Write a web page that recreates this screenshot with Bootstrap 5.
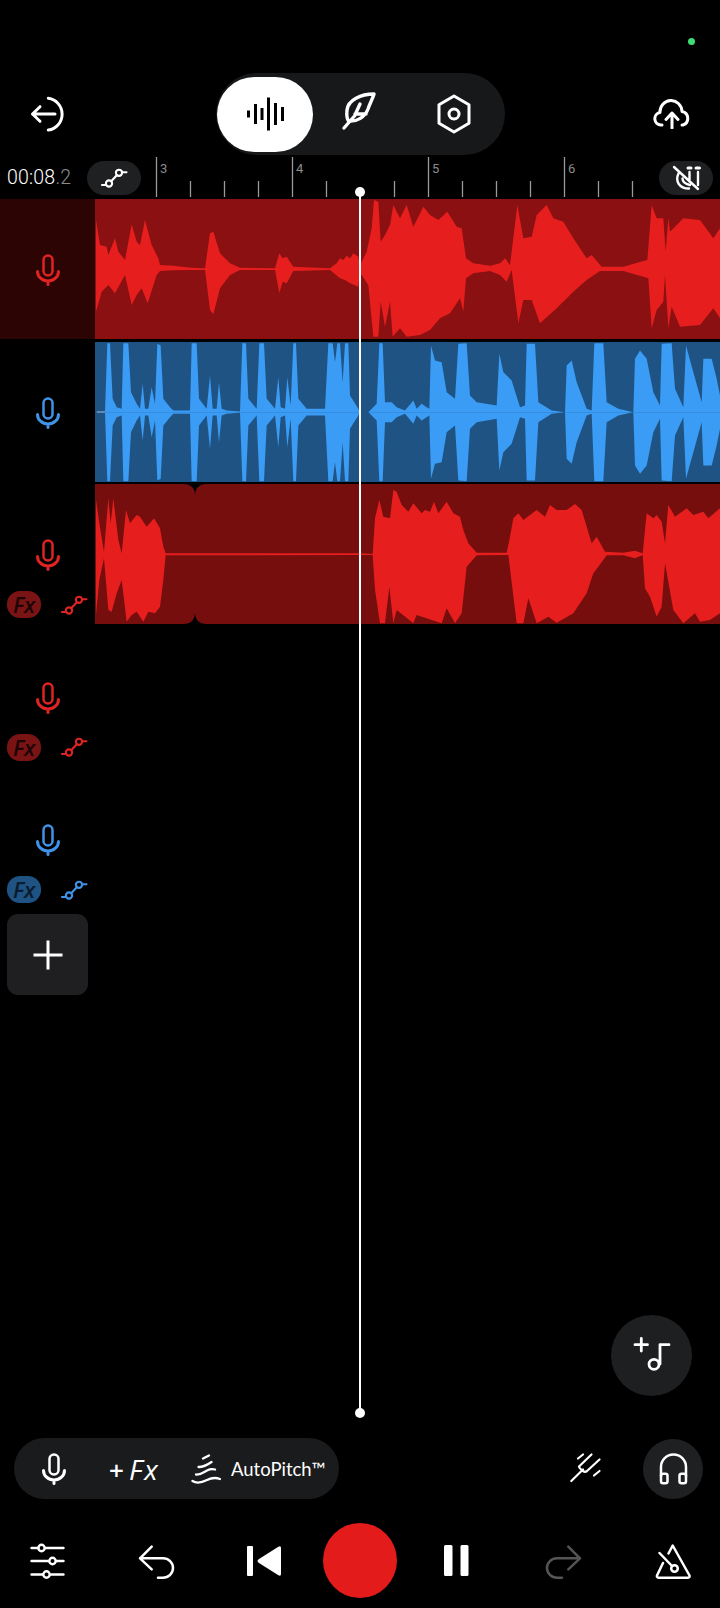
<!DOCTYPE html>
<html lang="en">
<head>
  <meta charset="UTF-8">
  <title>Studio - Multitrack</title>
  <meta name="viewport" content="width=device-width, initial-scale=1.0"/>
  <link href="https://cdn.jsdelivr.net/npm/bootstrap@5.3.3/dist/css/bootstrap.min.css" rel="stylesheet">
  <style>
    html, body { background: #000; }
    body { font-family: Roboto, "Liberation Sans", sans-serif; color: #fff; }
    svg { display: block; }
    .ico { fill: none; stroke: currentColor; stroke-linecap: round; stroke-linejoin: round; }

    .studio { height: 1608px; overflow: hidden; padding-bottom: 10px; }
    .status-bar { height: 73px; padding: 38px 25px 0 0; }
    .status-dot { width: 7px; height: 7px; background: #3ddc74; }

    .top-bar { height: 82px; display: grid; grid-template-columns: 216px 289px 1fr; }
    .mode-pill { background: #17181a; border-radius: 41px; height: 82px; }
    .mode-active { background: #fff; color: #000; width: 96px; height: 75px; border-radius: 38px; margin-left: 1px; }
    .mode-btn { width: 94px; height: 75px; }

    .ruler-bar { height: 44px; }
    .clock { width: 88px; padding-left: 7px; font-size: 19.5px; font-weight: 300; margin-top: 2px; white-space: nowrap; letter-spacing: .2px; }
    .clock span { color: #8a8a8a; }
    .ruler-pill { width: 54px; height: 34px; background: #1f2022; border-radius: 17px; margin-top: 1px; flex: none; }
    .ruler-mark { font: 13px Roboto, sans-serif; fill: #8c8c8c; }

    .track { height: 142.5px; }
    .rail { width: 95px; flex: none; height: 140px; padding: 55px 7px 0; }
    .rail-on { background: #2b0403; }
    .clip { width: 625px; height: 140px; }
    .clip-red { background: #8a1012; color: #e61e1e; }
    .clip-blue { background: #1f5384; color: #3b9cf5; }
    .clip-dim { background: #760e0e; color: #e61e1e; }
    .tone-red { color: #e02323; }
    .tone-blue { color: #3f93e8; }
    .fx-row { margin-top: 20px; height: 27px; }
    .fx-tag { width: 34px; height: 27px; border-radius: 13px; font: italic 600 22px "Open Sans", sans-serif; line-height: 26px; text-align: center; }
    .fx-red { background: #7a1414; color: #1d0505; }
    .fx-blue { background: #1f5384; color: #0b1c2e; }

    .add-track { width: 81px; height: 81px; margin: 2.5px 0 0 7px; background: #1f1f21; border-radius: 11px; color: #fff; }
    .add-track:hover, .add-track:active { background: #1f1f21 !important; }

    .fab-music { width: 81px; height: 81px; background: #1e1f21; margin-right: 28px; }
    .tool-bar { height: 61px; margin-top: 42px; padding: 0 17px 0 14px; }
    .tool-pill { width: 325px; height: 61px; background: #1a1b1d; border-radius: 31px; padding-left: 27px; }
    .pitch-label { font: 18.5px Lato, sans-serif; margin-left: 10px; white-space: nowrap; }
    .plus-fx { font: italic 400 28px "Open Sans", sans-serif; letter-spacing: 2px; margin-left: 42px; width: 48px; white-space: nowrap; }
    .plus-fx b { font-style: normal; font-weight: 600; font-size: 26px; margin-right: 3px; }
    .listen-btn { width: 60px; height: 60px; background: #1f2022; margin-left: 39px; }

    .transport { display: grid; grid-template-columns: 96px 120px 98px 92px 100px 116px 1fr; height: 75px; margin-top: 24px; }
    .rec-btn { width: 74px; height: 75px; background: #e31b1b; }

    /* playhead sits over the clips */
    .playhead { position: absolute; left: 359px; top: 192px; width: 2px; height: 1221px; background: #fff; }
    .playhead::before, .playhead::after { content: ""; position: absolute; left: -4px; width: 10px; height: 10px; border-radius: 50%; background: #fff; }
    .playhead::before { top: -5px; }
    .playhead::after { bottom: -5px; }
  </style>
</head>
<body>

<svg width="0" height="0" class="position-absolute">
  <symbol id="i-mic" viewBox="0 0 26 32">
    <rect class="ico" x="8.500" y="1.500" width="9" height="20" rx="4.500" stroke-width="2.500"/>
    <path class="ico" stroke-width="3" d="M2.500 17.500a10.500 9.500 0 0 0 21 0M13 27v3.500"/>
  </symbol>
  <symbol id="i-link" viewBox="0 0 28 20">
    <g class="ico" stroke-width="2.100">
      <circle cx="9" cy="15.500" r="3.100"/><circle cx="19" cy="4.800" r="3.100"/>
      <path d="M2 17H5.800M11.200 13.200l5.600-6M22.200 4.200H26.500"/>
    </g>
  </symbol>
</svg>

<div class="studio d-flex flex-column">

  <div class="status-bar d-flex justify-content-end">
    <div class="status-dot rounded-circle"></div>
  </div>

  <div class="top-bar">
    <div class="d-flex align-items-center" style="padding-left:30px">
      <svg width="36" height="36" class="ico" stroke-width="3">
        <path d="M18.300 2.300A16 16 0 0 1 18.300 34M25 18H2.500M10 10.700 2.500 18 10 25.300"/>
      </svg>
    </div>
    <div class="mode-pill d-flex align-items-center">
      <div class="mode-active d-flex align-items-center justify-content-center">
        <svg width="38" height="36" viewBox="245 96 38 36">
          <rect x="246" y="110.500" width="3" height="7"/><rect x="253" y="104" width="3" height="20"/>
          <rect x="259.500" y="108" width="3" height="12"/><rect x="266" y="97.500" width="3" height="33"/>
          <rect x="273" y="103" width="3" height="22"/><rect x="280" y="107" width="3" height="14"/>
        </svg>
      </div>
      <div class="mode-btn d-flex align-items-center justify-content-center">
        <svg width="46" height="46" viewBox="2 2 46 46" class="ico" stroke-width="3.400">
          <path d="M39 5C26 5 13 11 12 21 11.500 26 12 30 13.500 32 22 33 30 28 33 20 35 14 38 9 39 5ZM9 39 19.500 27 25 15M20 25H31"/>
        </svg>
      </div>
      <div class="mode-btn d-flex align-items-center justify-content-center">
        <svg width="36" height="40" class="ico" stroke-width="3">
          <path d="M18 2 33 10.700V29.300L18 38 3 29.300V10.700Z"/><circle cx="18" cy="20" r="5"/>
        </svg>
      </div>
    </div>
    <div class="d-flex align-items-center justify-content-end" style="padding-right:29px">
      <svg width="38" height="30" class="ico" stroke-width="3">
        <path d="M9 26H8A6.300 6.300 0 0 1 7 13.500 11 11.500 0 0 1 29 12.500 7 7 0 0 1 30 26H29M19 29V14M13 20.500 19 14 25 20.500"/>
      </svg>
    </div>
  </div>

  <div class="ruler-bar d-flex align-items-center">
    <div class="clock">00:08<span>.2</span></div>
    <div class="ruler-pill d-flex align-items-center justify-content-center" style="margin-left:-1px">
      <svg width="28" height="20"><use href="#i-link"/></svg>
    </div>
    <svg width="518" height="44" viewBox="141 155 518 44" class="flex-shrink-0">
      <g stroke="#9a9a9a" stroke-width="1.300">
        <path d="M156.500 157V197M292.500 157V197M428.500 157V197M564.500 157V197"/>
        <path d="M190.500 181V197M224.500 181V197M258.500 181V197M326.500 181V197M394.500 181V197M462.500 181V197M496.500 181V197M530.500 181V197M598.500 181V197M632.500 181V197"/>
      </g>
      <text class="ruler-mark" x="160" y="173">3</text>
      <text class="ruler-mark" x="296" y="173">4</text>
      <text class="ruler-mark" x="432" y="173">5</text>
      <text class="ruler-mark" x="568" y="173">6</text>
    </svg>
    <div class="ruler-pill ms-0 d-flex align-items-center justify-content-center">
      <svg width="30" height="30" class="ico" stroke-width="2.400">
        <path d="M3 4 27 26M7.500 10.500C4 18 8 25.500 18 25.500M11.500 15.500C11.500 19 14 21 19 22M18.500 9V18.500M27 9V22"/>
        <path d="M17 5H20M25 5H28.500" stroke-width="3"/>
      </svg>
    </div>
  </div>

  <div class="track d-flex">
    <div class="rail rail-on tone-red d-flex flex-column align-items-center">
      <svg width="26" height="32"><use href="#i-mic"/></svg>
    </div>
    <div class="clip clip-red">
      <svg width="625" height="140" viewBox="285 12 1875 420" fill="currentColor">
        <polygon points="288,75 300,150 320,155 325,180 345,130 355,170 375,195 395,88 410,140 420,150 435,75 455,150 475,190 480,210 520,212 575,218 615,220 630,115 640,110 660,175 690,205 720,218 825,220 838,175 848,190 860,185 880,215 990,220 1010,205 1020,190 1030,195 1040,182 1050,190 1060,175 1075,185 1080,215 1080,240 1075,275 1050,265 1035,255 1020,250 990,225 880,228 860,265 848,260 838,295 825,225 720,225 690,240 660,280 640,358 630,345 615,225 575,225 520,226 480,228 470,240 443,325 425,280 410,300 395,330 375,240 345,295 325,270 305,290 288,350"/>
        <polygon transform="translate(1080 0)" points="0,215 5,200 20,170 35,100 42,15 55,20 62,140 75,120 90,90 100,30 120,70 140,30 160,95 190,35 210,60 235,75 262,50 290,95 305,100 318,190 340,205 390,212 420,205 435,190 450,210 472,30 490,130 515,125 530,60 560,30 580,70 610,80 640,130 680,190 695,180 725,215 790,215 850,198 862,195 875,30 890,70 910,70 917,170 925,70 930,110 970,70 1020,75 1060,130 1080,100 1080,370 1060,340 1020,390 960,395 935,335 925,400 915,240 910,320 890,345 875,400 865,250 850,245 790,228 720,228 680,255 640,290 590,340 540,385 515,315 490,315 475,385 455,225 440,260 420,240 390,228 340,235 318,250 310,350 300,310 270,355 240,370 210,405 180,420 140,425 120,400 98,425 90,320 75,395 62,320 55,425 40,425 25,270 5,240 0,240"/>
      </svg>
    </div>
  </div>

  <div class="track d-flex">
    <div class="rail tone-blue d-flex flex-column align-items-center">
      <svg width="26" height="32"><use href="#i-mic"/></svg>
    </div>
    <div class="clip clip-blue">
      <svg width="625" height="140" viewBox="285 439.500 1875 420" fill="currentColor">
        <path d="M290 648H315V651H290Z" fill="#9dc4e8"/>
        <g id="blue-half">
          <polygon points="315,650 322,443 330,443 338,610 350,635 365,640 370,443 385,443 393,590 410,625 420,640 428,565 435,640 445,640 455,575 465,625 472,445 482,450 490,610 510,635 520,645 570,645 575,443 590,443 597,610 620,640 630,540 638,640 650,640 657,560 665,640 680,645 720,648 727,443 738,443 745,610 770,640 778,443 792,443 800,610 825,640 835,545 842,635 855,640 862,545 872,630 880,443 888,443 895,610 920,640 975,640 985,443 998,443 1005,500 1012,443 1020,443 1028,560 1035,443 1045,443 1050,600 1075,640 1080,650"/>
          <polygon transform="translate(1080 0)" points="0,650 25,650 50,625 58,443 68,443 75,620 95,620 110,635 135,645 160,615 170,640 185,625 200,635 208,640 213,450 225,495 245,500 260,590 285,610 295,445 320,443 330,600 350,620 410,630 418,475 430,530 455,555 480,635 495,630 500,445 525,445 535,620 575,645 615,650 620,510 635,495 650,560 680,640 695,645 703,443 730,443 740,620 775,640 820,650 825,490 840,465 860,490 880,590 900,630 905,445 935,443 945,580 970,635 978,450 1000,530 1025,620 1030,490 1055,490 1070,550 1080,600 1080,650"/>
        </g>
        <use href="#blue-half" transform="matrix(1 0 0 -1 0 1300)"/>
      </svg>
    </div>
  </div>

  <div class="track d-flex">
    <div class="rail tone-red">
      <svg width="26" height="32" class="mx-auto"><use href="#i-mic"/></svg>
      <div class="fx-row d-flex justify-content-between align-items-center">
        <div class="fx-tag fx-red">Fx</div>
        <svg width="28" height="20"><use href="#i-link"/></svg>
      </div>
    </div>
    <div class="clip clip-dim">
      <svg width="625" height="140" viewBox="285 12 1875 420" fill="currentColor">
        <polygon points="288,60 298,130 312,215 325,55 332,130 340,55 355,180 365,220 378,90 390,130 410,105 420,110 440,140 462,115 480,145 490,200 497,220 1080,220 1080,225 497,226 490,300 480,380 465,400 445,395 430,425 410,395 395,405 380,425 365,300 350,340 335,395 325,390 312,235 298,300 288,405"/>
        <polygon transform="translate(1080 0)" points="0,220 38,222 45,115 58,60 70,110 90,115 100,30 110,35 125,75 145,95 160,70 185,100 195,90 210,95 222,65 235,100 260,65 280,100 300,110 310,150 325,190 350,218 440,218 450,170 460,115 475,100 490,120 530,90 555,110 570,75 590,90 620,90 645,72 665,90 695,190 710,170 735,215 790,218 825,212 848,220 860,100 880,115 890,105 905,125 915,190 925,75 945,110 980,85 1000,105 1030,95 1045,115 1080,85 1080,400 1050,420 1020,425 1005,400 970,430 940,390 915,250 905,380 890,410 870,350 855,325 848,225 825,235 790,226 740,226 715,260 700,280 680,340 640,400 590,428 565,410 530,430 505,355 490,430 470,430 445,225 350,226 320,260 305,400 285,430 260,385 245,430 170,405 160,430 110,390 100,430 88,320 75,430 60,430 45,330 38,225 0,225"/>
        <path fill="#000" d="M550 12Q585 12 585 47 585 12 620 12ZM550 432Q585 432 585 397 585 432 620 432Z"/>
      </svg>
    </div>
  </div>

  <div class="track d-flex">
    <div class="rail tone-red">
      <svg width="26" height="32" class="mx-auto"><use href="#i-mic"/></svg>
      <div class="fx-row d-flex justify-content-between align-items-center">
        <div class="fx-tag fx-red">Fx</div>
        <svg width="28" height="20"><use href="#i-link"/></svg>
      </div>
    </div>
  </div>

  <div class="track d-flex">
    <div class="rail tone-blue">
      <svg width="26" height="32" class="mx-auto"><use href="#i-mic"/></svg>
      <div class="fx-row d-flex justify-content-between align-items-center">
        <div class="fx-tag fx-blue">Fx</div>
        <svg width="28" height="20"><use href="#i-link"/></svg>
      </div>
    </div>
  </div>

  <button class="btn add-track border-0 p-0 d-flex align-items-center justify-content-center flex-shrink-0">
    <svg width="32" height="32" class="ico" stroke-width="3"><path d="M16 1.500V30.500M1.500 16H30.500" stroke-linecap="butt"/></svg>
  </button>

  <div class="flex-grow-1"></div>

  <div class="d-flex justify-content-end">
    <div class="fab-music rounded-circle d-flex align-items-center justify-content-center">
      <svg width="38" height="38" class="ico" stroke-width="2.800">
        <path d="M8.300 1.500V14M2 7.700H14.500M27 27V7.700H36"/><circle cx="21" cy="27.300" r="5"/>
      </svg>
    </div>
  </div>

  <div class="tool-bar d-flex align-items-center">
    <div class="tool-pill d-flex align-items-center">
      <svg width="26" height="32"><use href="#i-mic"/></svg>
      <div class="plus-fx"><b>+</b>Fx</div>
      <svg width="30" height="31" viewBox="6 7 30 31" class="ico" stroke-width="2.300" style="margin-left:34px">
        <path d="M18 12.500 24 9.500M13.500 21C18 21 23 18.500 26.500 16M11 28.500C16 29 19 26 22 24.500 25 23 28 23 30 23.500M7.500 35C12 38 17 36.500 22 34 27 31.500 31 31.500 35 33"/>
      </svg>
      <div class="pitch-label">AutoPitch™</div>
    </div>
    <div class="ms-auto d-flex align-items-center">
      <svg width="36" height="36" class="ico" stroke-width="2.200">
        <path d="M3.300 30 15 18.500M23.500 3.500 11 15.500Q11 17 15 20 17 21.500 19 20L31.500 8.500M10 7.500 15 3.500M26 24.500 31.500 20"/>
      </svg>
      <div class="listen-btn rounded-circle d-flex align-items-center justify-content-center">
        <svg width="33" height="34" class="ico" stroke-width="2.500">
          <path d="M4 24V15A12.500 12.500 0 0 1 29 15V24"/>
          <rect x="4" y="21.700" width="6.500" height="9.500" rx="2"/><rect x="22.500" y="21.700" width="6.500" height="9.500" rx="2"/>
        </svg>
      </div>
    </div>
  </div>

  <div class="transport">
    <div class="d-flex align-items-center justify-content-center">
      <svg width="36" height="36" class="ico" stroke-width="2.400">
        <path d="M1.500 5H8.500M15 5H33.500M1.500 18H18.500M26 18H33.500M1.500 31.500H13M21 31.500H33.500"/>
        <circle cx="11.500" cy="5" r="3.200"/><circle cx="22.500" cy="18" r="3.200"/><circle cx="16.500" cy="31.500" r="3.200"/>
      </svg>
    </div>
    <div class="d-flex align-items-center justify-content-center">
      <svg width="40" height="36" class="ico" stroke-width="2.500">
        <path d="M15.700 3.700 4 15.300 15.700 26.300M4 15.300H27A10 9.700 0 0 1 27 34.700H22"/>
      </svg>
    </div>
    <div class="d-flex align-items-center justify-content-center">
      <svg width="36" height="32" fill="#fff">
        <rect x="0" y="1" width="6" height="30" rx="1"/>
        <path d="M34 3V29Q34 32 31 30L12 18Q9 16 12 14L31 2Q34 0 34 3Z"/>
      </svg>
    </div>
    <div class="d-flex align-items-center justify-content-center">
      <button class="btn rec-btn rounded-circle border-0 p-0"></button>
    </div>
    <div class="d-flex align-items-center justify-content-center gap-2">
      <svg width="25" height="31" fill="#fff">
        <rect x="0" y="0" width="8.500" height="31" rx="1.500"/><rect x="16.500" y="0" width="8" height="31" rx="1.500"/>
      </svg>
    </div>
    <div class="d-flex align-items-center justify-content-center" style="color:#555">
      <svg width="40" height="36" class="ico" stroke-width="2.500">
        <path d="M24.300 3.700 36 15.300 24.300 26.300M36 15.300H13A10 9.700 0 0 0 13 34.700H18"/>
      </svg>
    </div>
    <div class="d-flex align-items-center justify-content-end" style="padding-right:29px">
      <svg width="36" height="38" class="ico" stroke-width="2.500">
        <path d="M13.500 11.500 17.700 3.500 34.500 33.500Q35 35.700 33 35.700H3.500Q1.500 35.700 2 33.500L8 21"/>
        <path d="M4.500 11 17 24"/><circle cx="19.500" cy="26.500" r="3.300"/>
      </svg>
    </div>
  </div>

</div>

<div class="playhead"></div>

<script src="https://cdn.jsdelivr.net/npm/bootstrap@5.3.3/dist/js/bootstrap.bundle.min.js"></script>
</body>
</html>
